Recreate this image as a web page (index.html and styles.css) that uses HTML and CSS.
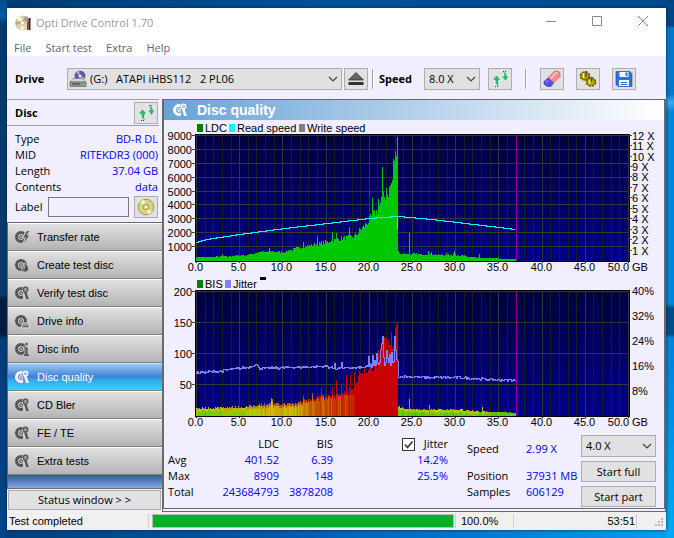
FILE: index.html
```html
<!DOCTYPE html>
<html lang="en">
  <head>
    <meta charset="UTF-8" />
    <meta name="viewport" content="width=device-width, initial-scale=1.0" />
    <title>Opti Drive Control 1.70</title>
    <link rel="stylesheet" href="styles.css">
  </head>
  <body>
    <svg class="defs" aria-hidden="true">
      <symbol id="disc" viewBox="0 0 16 16">
        <path fill="currentColor" fill-rule="evenodd" d="M7 2a6 6 0 1 0 0 12A6 6 0 0 0 7 2zM7 5a3 3 0 1 1 0 6 3 3 0 0 1 0-6z"/>
        <circle cx="7" cy="8" r="1.500" fill="none" stroke="currentColor"/>
      </symbol>
      <symbol id="disc-test" viewBox="0 0 16 16">
        <use href="#disc"/>
        <circle class="cut" cx="11.500" cy="4.500" r="3.300"/>
        <path class="cut" d="M9 8h4l2 6H9z"/>
        <circle cx="11.500" cy="4.500" r="2.200" fill="none" stroke="currentColor" stroke-width="1.400"/>
        <path fill="currentColor" d="M10 7.500h3l.5 3 1.500 3.500h-3L11 10z"/>
        <circle cx="11.500" cy="4.500" r=".8" fill="currentColor"/>
      </symbol>
      <symbol id="disc-bolt" viewBox="0 0 16 16">
        <use href="#disc"/>
        <path class="cut" d="M12 1L8 9h2.500L8 16l7.500-9z"/>
        <path fill="currentColor" d="M13 2L9.500 8.500H12L10 14l5-7.500h-2.500L15 2z"/>
      </symbol>
      <symbol id="disc-burn" viewBox="0 0 16 16">
        <use href="#disc"/>
        <path fill="currentColor" stroke="#ccc" stroke-width=".8" d="M10 6c3 1 5 4 4.500 6.500C14 14.500 12.500 15 11 15c-2.500 0-4-2-3-4.500.5 1 1 1.500 2 1.500 1-2 .5-4 0-6z"/>
      </symbol>
      <symbol id="disc-drive" viewBox="0 0 16 16">
        <use href="#disc"/>
        <path fill="#999" stroke="#ddd" stroke-width=".8" d="M7.500 12l2-2h4.500l1.500 2v3h-8z"/>
        <path stroke="#555" d="M9 13.500h5"/>
      </symbol>
      <symbol id="disc-info" viewBox="0 0 16 16">
        <use href="#disc"/>
        <path fill="currentColor" stroke="#ccc" stroke-width=".8" d="M11 1.500h3v3h-3zM9.500 6H14v7h1.500v2.500h-6V13H11V8H9.500z"/>
      </symbol>
      <symbol id="refresh" viewBox="0 0 18 18">
        <path fill="#28b870" stroke="#fff" stroke-width=".6" d="M5.500 5L1 10h3c0 4 2 6 5 7-1.500-2-2-4-1-7h2zM9 1c3 0 4 2 4 5h-2.500l4 5.500L18 6h-2c0-3-2.500-5-7-5z"/>
        <path stroke="#333" stroke-dasharray="1 1" d="M12 1.500h4M4 16.500h4"/>
      </symbol>
      <symbol id="chevron" viewBox="0 0 10 6">
        <path fill="none" stroke="#444" stroke-width="1.200" d="M1 1l4 4 4-4"/>
      </symbol>
    </svg>

    <div class="window">
      <header class="titlebar">
        <svg class="app-icon" viewBox="0 0 16 16">
          <circle cx="7.500" cy="8" r="7" fill="#e3d6a4" stroke="#a99c77" stroke-width=".5"/>
          <path fill="#fff9dc" d="M7.500 8L2 3.500 5.500 1zM7.500 8L9 15l-4-.5z"/>
          <path fill="#b5aa86" d="M7.500 8L1 6v4zM7.500 8L12 2.500 9 1z"/>
          <circle cx="7.500" cy="8" r="2" fill="#fff" stroke="#999" stroke-width=".6"/>
          <path fill="#a09a90" d="M10 4l2-3 1 1v5h-3z"/>
          <path fill="#222" d="M13.500 3h2v12h-2z"/>
          <path fill="#b03028" d="M12 7h1.500v8H12z"/>
        </svg>
        <span class="title">Opti Drive Control 1.70</span>
        <div class="win-buttons">
          <button aria-label="Minimize"><svg viewBox="0 0 12 12"><path d="M1 6.500h10"/></svg></button>
          <button aria-label="Maximize"><svg viewBox="0 0 12 12"><path d="M1.500 1.500h9v9h-9z"/></svg></button>
          <button aria-label="Close"><svg viewBox="0 0 12 12"><path d="M1 1l10 10M11 1L1 11"/></svg></button>
        </div>
      </header>

      <nav class="menu">
        <a href="#">File</a>
        <a href="#">Start test</a>
        <a href="#">Extra</a>
        <a href="#">Help</a>
      </nav>

      <div class="toolbar">
        <label class="drive-label" for="drive">Drive</label>
        <div class="select drive">
          <svg class="drive-icon" viewBox="0 0 18 18">
            <circle cx="11" cy="6" r="5.500" fill="#655a99"/>
            <path fill="#b9afe0" d="M11 6L7 2l3-1.500zM11 6l5 2-2 3z"/>
            <circle cx="11" cy="6" r="1.500" fill="#eee"/>
            <path fill="#d5d5d5" stroke="#777" stroke-width=".6" d="M1 12l3-3.500h10l3 3.500z"/>
            <path fill="#999" stroke="#555" stroke-width=".6" d="M1 12h16v4.500H1z"/>
            <path stroke="#333" d="M3 14h8"/>
            <path stroke="#20d020" stroke-width="2" d="M12 14h2"/>
          </svg>
          <select id="drive"><option>(G:)&nbsp;&nbsp; ATAPI iHBS112&nbsp;&nbsp; 2 PL06</option></select>
          <svg class="arrow"><use href="#chevron"/></svg>
        </div>
        <button class="tool" aria-label="Eject">
          <svg viewBox="0 0 18 18">
            <path fill="#666" stroke="#222" stroke-width=".7" d="M9 2.500l7.500 7.500h-15z"/>
            <path fill="#333" d="M1.500 12h15v3h-15z"/>
          </svg>
        </button>
        <span class="sep"></span>
        <label class="speed-label" for="speed">Speed</label>
        <div class="select speed">
          <select id="speed"><option>8.0 X</option></select>
          <svg class="arrow"><use href="#chevron"/></svg>
        </div>
        <button class="tool" aria-label="Refresh speed"><svg><use href="#refresh"/></svg></button>
        <span class="sep wide"></span>
        <div class="tools">
          <button class="tool" aria-label="Erase">
            <svg viewBox="0 0 18 18">
              <path fill="#ff8a8a" stroke="#c05050" stroke-width=".6" d="M5 8l6.500-7H15l2 2v3.500L10.500 13z"/>
              <path fill="#5050f0" stroke="#3030a0" stroke-width=".6" d="M5 8l5.500 5L8 16.500H4L1 14v-2.500z"/>
              <path stroke="#ffd0d0" stroke-width="1.500" d="M8 8.500L14 2"/>
              <path stroke="#9090ff" stroke-width="1.500" d="M3 12.500l2-2"/>
            </svg>
          </button>
          <button class="tool" aria-label="Options">
            <svg viewBox="0 0 18 18">
              <ellipse cx="6" cy="6" rx="4.500" ry="4" fill="#b0a800" stroke="#6a6400" stroke-width="1.800" stroke-dasharray="2.500 .8"/>
              <ellipse cx="12" cy="12" rx="4.500" ry="4" fill="#b8ae00" stroke="#6a6400" stroke-width="1.800" stroke-dasharray="2.500 .8"/>
              <path stroke="#f0ea90" stroke-width="1.500" d="M4.500 3v5M10.500 9.500v4"/>
              <path stroke="#555" stroke-width="1.500" d="M7 1v6M12.500 7v5"/>
            </svg>
          </button>
          <button class="tool" aria-label="Save">
            <svg viewBox="0 0 18 18">
              <path fill="#2f6fe4" stroke="#1848b0" stroke-width=".6" d="M1 1.500h14l2 2v13H3l-2-2z"/>
              <path fill="#f4f8ff" d="M4.500 2h9v5h-9zM4 10h10v6H4z"/>
              <path fill="#2f6fe4" d="M10.500 2.500h2v3.500h-2zM6 12h6v1H6zM6 14h6v1H6z"/>
            </svg>
          </button>
        </div>
      </div>

      <div class="main">
        <aside class="sidebar">
          <div class="disc-head">
            <h2>Disc</h2>
            <button class="tool" aria-label="Refresh disc"><svg><use href="#refresh"/></svg></button>
          </div>
          <div class="disc-info">
            <dl>
              <dt>Type</dt><dd>BD-R DL</dd>
              <dt>MID</dt><dd>RITEKDR3 (000)</dd>
              <dt>Length</dt><dd>37.04 GB</dd>
              <dt>Contents</dt><dd>data</dd>
            </dl>
            <div class="label-row">
              <label for="disc-label">Label</label>
              <input type="text" id="disc-label">
              <button class="tool" aria-label="Read label">
                <svg viewBox="0 0 18 18">
                  <circle cx="9" cy="9" r="7.800" fill="#dcd67a" stroke="#77744a" stroke-width=".7"/>
                  <path fill="#fbf8bd" d="M9 9L3 4l4-2.500zM9 9l6 5-4 2.500z"/>
                  <circle cx="9" cy="9" r="3" fill="#c9c37c" stroke="#8a875a" stroke-width=".6"/>
                  <circle cx="9" cy="9" r="1.300" fill="#fff"/>
                </svg>
              </button>
            </div>
          </div>
          <div class="tests">
            <button><svg><use href="#disc-bolt"/></svg>Transfer rate</button>
            <button><svg><use href="#disc-burn"/></svg>Create test disc</button>
            <button><svg><use href="#disc-test"/></svg>Verify test disc</button>
            <button><svg><use href="#disc-drive"/></svg>Drive info</button>
            <button><svg><use href="#disc-info"/></svg>Disc info</button>
            <button class="active"><svg><use href="#disc-test"/></svg>Disc quality</button>
            <button><svg><use href="#disc-test"/></svg>CD Bler</button>
            <button><svg><use href="#disc-test"/></svg>FE / TE</button>
            <button><svg><use href="#disc-test"/></svg>Extra tests</button>
          </div>
          <button class="status-window">Status window &gt; &gt;</button>
        </aside>

        <section class="panel">
          <h1><svg><use href="#disc-test"/></svg>Disc quality</h1>
          <svg id="ldc" class="chart" viewBox="0 0 500 157"></svg>
          <svg id="bis" class="chart" viewBox="0 0 500 156"></svg>
          <div class="results">
            <table>
              <thead>
                <tr>
                  <td></td><th>LDC</th><th>BIS</th>
                  <th><label><input type="checkbox" checked><svg class="tick" viewBox="0 0 13 13"><path d="M3 6.500L5.500 9.500 10.500 3.500"/></svg>Jitter</label></th>
                </tr>
              </thead>
              <tbody>
                <tr><th>Avg</th><td>401.52</td><td>6.39</td><td>14.2%</td></tr>
                <tr><th>Max</th><td>8909</td><td>148</td><td>25.5%</td></tr>
                <tr><th>Total</th><td>243684793</td><td>3878208</td><td></td></tr>
              </tbody>
            </table>
            <dl class="progress-info">
              <dt class="first">Speed</dt><dd class="first">2.99 X</dd>
              <dt>Position</dt><dd>37931 MB</dd>
              <dt>Samples</dt><dd>606129</dd>
            </dl>
            <div class="actions">
              <div class="select">
                <select aria-label="Test speed"><option>4.0 X</option></select>
                <svg class="arrow"><use href="#chevron"/></svg>
              </div>
              <button>Start full</button>
              <button>Start part</button>
            </div>
          </div>
        </section>
      </div>

      <footer class="statusbar">
        <span class="message">Test completed</span>
        <div class="bar"><div class="fill" style="width: 100%"></div></div>
        <span class="percent">100.0%</span>
        <span class="time">53:51</span>
        <svg class="grip" viewBox="0 0 10 10"><path d="M7 0h2v2H7zM4 3h2v2H4zM7 3h2v2H7zM1 6h2v2H1zM4 6h2v2H4zM7 6h2v2H7z"/></svg>
      </footer>
    </div>
    <script src="script.js"></script>
  </body>
</html>
```

FILE: styles.css
```css
* {
  box-sizing: border-box;
}
body {
  margin: 0;
  min-height: 100vh;
  padding: 8px 8px 8px 7px;
  font: 11px/16px "Open Sans", "Noto Sans", sans-serif;
  color: #000;
  background:
    linear-gradient(#004686 0 26px, #0078cc 28px 94px, #38aaf4 102px, #0086dc 112px 304px, #004c88 308px 334px, #0080dc 338px, #00a8f4) right / 8px 100% no-repeat,
    linear-gradient(#004a8c, #0060a8 16px, #003a6e 24px 294px, #001e44 300px 334px, #003e78 340px, #004488) left / 7px 100% no-repeat,
    linear-gradient(90deg, #003c74, #00529c 50%, #004a8c) top / 100% 8px no-repeat,
    linear-gradient(90deg, #003f7c, #0058a8 40%, #0078d4 70%, #00a0f0) bottom / 100% 8px no-repeat,
    #00529c;
}
h1, h2, dl, dd {
  margin: 0;
}
button, select, input {
  font: inherit;
  color: inherit;
}
button {
  padding: 0;
}
.defs {
  position: absolute;
  width: 0;
  height: 0;
}

.window {
  background: #f0eeff;
  box-shadow: 0 0 3px #002850;
}
.titlebar {
  display: flex;
  align-items: center;
  height: 32px;
  padding: 0 0 2px 8px;
  background: #fff;
  color: #999;
}
.app-icon {
  width: 16px;
  height: 16px;
  margin-right: 5px;
}
.title {
  flex: 1;
}
.win-buttons {
  display: flex;
}
.win-buttons button {
  width: 46px;
  height: 28px;
  border: 0;
  background: none;
}
.win-buttons svg {
  width: 12px;
  height: 12px;
  fill: none;
  stroke: #888;
}
.menu {
  display: flex;
  gap: 14px;
  height: 16px;
  padding-left: 7px;
  background: #fff;
}
.menu a {
  color: #666;
  text-decoration: none;
}

.toolbar {
  display: flex;
  align-items: center;
  height: 43px;
  padding: 3px 8px 0;
}
.toolbar label {
  font-weight: bold;
}
.drive-label {
  width: 52px;
}
.speed-label {
  width: 45px;
}
.select {
  position: relative;
}
.select select {
  display: block;
  width: 100%;
  height: 22px;
  padding: 0 4px;
  border: 1px solid #adadad;
  border-radius: 0;
  background: #e1e1e1;
  appearance: none;
}
.select .arrow {
  position: absolute;
  right: 4px;
  top: 8px;
  width: 10px;
  height: 6px;
  pointer-events: none;
}
.drive {
  flex: 0 1 275px;
  margin-right: 2px;
}
.drive select {
  padding-left: 22px;
}
.drive-icon {
  position: absolute;
  left: 2px;
  top: 2px;
  width: 18px;
  height: 18px;
}
.speed {
  width: 56px;
  margin-right: 8px;
}
.tool {
  display: flex;
  align-items: center;
  justify-content: center;
  width: 24px;
  height: 22px;
  border: 1px solid #adadad;
  background: #e1e1e1;
}
.tool svg {
  width: 18px;
  height: 18px;
}
.sep {
  width: 2px;
  height: 20px;
  margin: 0 5px 0 4px;
  border-left: 1px solid #a0a0a0;
  border-right: 1px solid #fff;
}
.sep.wide {
  margin: 0 13px;
}
.tools {
  display: flex;
  gap: 12px;
}

.main {
  display: grid;
  grid-template-columns: 155px 1fr;
}
.sidebar {
  display: flex;
  flex-direction: column;
}
.disc-head {
  display: flex;
  align-items: center;
  justify-content: space-between;
  height: 27px;
  margin-right: 3px;
  padding: 0 1px 0 8px;
  border-top: 1px solid #a0a0a0;
  border-bottom: 1px solid #a0a0a0;
}
.disc-head h2 {
  font-size: 11px;
}
.disc-info {
  height: 96px;
  padding: 5px 4px 0 8px;
}
.disc-info dl {
  display: grid;
  grid-template-columns: auto auto;
  justify-content: space-between;
}
dd {
  color: #0000ff;
}
.disc-info dd {
  text-align: right;
}
.label-row {
  display: flex;
  align-items: center;
  gap: 5px;
  padding-top: 1px;
}
.label-row input {
  flex: 1;
  min-width: 0;
  height: 20px;
  border: 1px solid #7a7a7a;
  background: #f0eeff;
}
.tests {
  flex: 1;
  padding-bottom: 13px;
  border: 1px solid #696969;
  border-right: 0;
  background: linear-gradient(#2c58a0, #86aade) bottom / 100% 13px no-repeat;
}
.tests button {
  display: flex;
  align-items: center;
  gap: 7px;
  width: 100%;
  height: 28px;
  padding-left: 6px;
  border: 0;
  border-top: 1px solid #fff;
  border-bottom: 1px solid #808080;
  background: linear-gradient(#e0e0e0, #b4b4b4);
  font: 11px/16px "Liberation Sans", Arial, sans-serif;
}
.tests svg {
  width: 16px;
  height: 16px;
  color: #555;
  --cut: #ccc;
}
.tests button.active {
  border-top-color: #b8e8ff;
  background: linear-gradient(#9cc8f4, #3c80d4 50%, #30a8e8 60%, #34d4fc);
  color: #fff;
}
.tests .active svg {
  color: #fff;
  --cut: #5c9ce0;
}
.cut {
  fill: var(--cut);
}
.status-window {
  height: 20px;
  margin: 1px 1px 2px;
  border: 1px solid #adadad;
  background: #e1e1e1;
  line-height: 16px;
}

.panel {
  border: solid #696969;
  border-width: 1px 2px 4px;
  border-bottom-style: double;
}
.panel h1 {
  display: flex;
  align-items: center;
  gap: 9px;
  height: 20px;
  padding-left: 8px;
  background: linear-gradient(90deg, #68a2d6, #fff);
  color: #fff;
  font: bold 14px/20px "Liberation Sans", Arial, sans-serif;
}
.panel h1 svg {
  width: 16px;
  height: 16px;
  --cut: #6ea6d8;
}
.chart {
  display: block;
  width: 100%;
  height: auto;
  font: 11px "Liberation Sans", Arial, sans-serif;
  shape-rendering: crispEdges;
}
.results {
  display: flex;
  height: 75px;
  padding: 2px 8px 0 4px;
}
.results table {
  flex: none;
  width: 280px;
  height: 64px;
  margin-top: 1px;
  border-collapse: collapse;
  table-layout: fixed;
}
.results th, .results td {
  width: 54px;
  height: 16px;
  padding: 0;
  font-weight: normal;
  text-align: right;
}
.results tbody td {
  color: #0000ff;
}
.results th:first-child, .results td:first-child {
  width: 34px;
  text-align: left;
}
.results th:nth-child(2), .results td:nth-child(2) {
  width: 77px;
}
.results th:nth-child(4), .results td:nth-child(4) {
  width: 115px;
}
.results label {
  position: relative;
  display: flex;
  align-items: center;
  justify-content: flex-end;
  gap: 9px;
}
.results input {
  width: 13px;
  height: 13px;
  margin: 0;
  border: 1px solid #333;
  background: #fff;
  appearance: none;
}
.results .tick {
  width: 13px;
  height: 13px;
  margin-left: -22px;
  fill: none;
  stroke: #333;
  stroke-width: 1.5px;
  pointer-events: none;
}
.results input:not(:checked) + .tick {
  visibility: hidden;
}
.progress-info {
  display: grid;
  grid-template-columns: 59px auto;
  grid-template-rows: 32px 16px 16px;
  margin: 1px auto 0 19px;
}
.progress-info .first {
  padding-top: 5px;
}
.actions {
  display: flex;
  flex-direction: column;
  gap: 4px;
  width: 75px;
}
.actions button {
  height: 21px;
  border: 1px solid #adadad;
  background: #e1e1e1;
}

.statusbar {
  display: flex;
  align-items: stretch;
  height: 18px;
  padding: 2px;
  background: #f0f0f0;
  font: 11px/15px "Liberation Sans", Arial, sans-serif;
}
.message {
  width: 140px;
  margin-right: 3px;
  border-right: 1px solid #d0d0d0;
}
.bar {
  flex: 1;
  border: 1px solid #bcbcbc;
  background: #e6e6e6;
}
.fill {
  height: 100%;
  background: #06b025;
}
.percent {
  width: 59px;
  margin-left: 1px;
  padding-left: 5px;
  border-left: 1px solid #d0d0d0;
  border-right: 1px solid #d0d0d0;
}
.time {
  width: 123px;
  padding-right: 1px;
  border-right: 1px solid #d0d0d0;
  text-align: right;
}
.grip {
  align-self: flex-end;
  width: 10px;
  height: 10px;
  margin-left: 17px;
  fill: #b8b8b8;
}
```

FILE: script.js
```js
var NS = 'http://www.w3.org/2000/svg';
var LEFT = 32, WIDTH = 433;   // plot area
var END = 320;                // last recorded column
var seed = 7;

function rnd() {
  seed = (seed * 16807) % 2147483647;
  return seed / 2147483647;
}

function add(svg, name, attrs, text) {
  var el = document.createElementNS(NS, name);
  for (var k in attrs) el.setAttribute(k, attrs[k]);
  if (text) el.textContent = text;
  svg.appendChild(el);
  return el;
}

// linear interpolation between [x, value] points
function at(points, x) {
  for (var i = 1; i < points.length; i++) {
    var a = points[i - 1], b = points[i];
    if (x <= b[0]) return a[1] + (b[1] - a[1]) * (x - a[0]) / (b[0] - a[0]);
  }
  return points[points.length - 1][1];
}

function line(svg, x1, y1, x2, y2, color) {
  add(svg, 'path', { d: 'M' + x1 + ' ' + y1 + 'L' + x2 + ' ' + y2, stroke: color, fill: 'none' });
}

function plot(svg, top, bottom, rows) {
  var defs = add(svg, 'linearGradient', { id: svg.id + '-bg', x1: 0, y1: 0, x2: 0, y2: 1 });
  add(defs, 'stop', { offset: 0, 'stop-color': '#000040' });
  add(defs, 'stop', { offset: 1, 'stop-color': '#000088' });
  add(svg, 'rect', { x: LEFT - 1, y: top - 1, width: WIDTH + 2, height: bottom - top + 2, fill: '#000' });
  add(svg, 'rect', { x: LEFT, y: top, width: WIDTH, height: bottom - top, fill: 'url(#' + svg.id + '-bg)' });
  for (var gb = 0; gb <= 50; gb++) {
    var x = LEFT + Math.round(gb * 8.64) + 0.5;
    line(svg, x, top, x, bottom, gb % 5 ? '#1c1c1c' : '#343434');
    if (gb % 5 == 0) {
      line(svg, x, bottom, x, bottom + 2, '#000');
      add(svg, 'text', { x: gb == 50 ? x - 10 : x - 1, y: bottom + 10, 'text-anchor': 'middle' }, gb.toFixed(1));
    }
  }
  add(svg, 'text', { x: 468, y: bottom + 10 }, 'GB');
  for (var i = 0; i < rows.length; i++) {
    var y = Math.round(bottom - (bottom - top - 1) * (i + 1) / rows.length) - 0.5;
    line(svg, LEFT, y, LEFT + WIDTH, y, '#343434');
    line(svg, LEFT - 4, y, LEFT, y, '#444');
    add(svg, 'text', { x: 28, y: y + 4, 'text-anchor': 'end' }, rows[i]);
  }
}

function legend(svg, y, items) {
  items.forEach(function (it) {
    add(svg, 'rect', { x: it[0], y: y - 8, width: 6, height: 8, fill: it[1] });
    add(svg, 'text', { x: it[0] + 8, y: y }, it[2]);
  });
}

function drawLdc() {
  var svg = document.getElementById('ldc');
  var top = 15, bottom = 141;
  var rows = ['1000', '2000', '3000', '4000', '5000', '6000', '7000', '8000', '9000'];
  plot(svg, top, bottom, rows);
  legend(svg, 12, [[33, '#008000', 'LDC'], [65, '#00ffff', 'Read speed'], [135, '#808080', 'Write speed']]);

  var level = [[0, 250], [31, 310], [51, 400], [64, 620], [88, 620], [98, 800], [108, 1000], [121, 1150],
    [131, 1300], [144, 1500], [158, 1650], [164, 2100], [171, 2600], [176, 3000], [181, 3400], [186, 4200],
    [189, 4400], [193, 4800], [196, 5400], [198, 6700], [200, 7300], [201, 7500], [202, 500], [235, 430],
    [265, 380], [280, 220], [320, 120]];
  var peaks = { 26: 480, 73: 900, 107: 1350, 121: 1780, 136: 2100, 140: 2000, 153: 2400, 176: 4500, 182: 4400,
    186: 6700, 190: 5200, 194: 5400, 197: 7300, 201: 8850, 202: 700, 213: 2000, 232: 700, 235: 650,
    250: 560, 257: 560, 258: 700, 259: 520, 283: 500 };
  var d = '';
  for (var x = 0; x < END; x++) {
    var v = peaks[x] || at(level, x) * (0.94 + rnd() * 0.24);
    d += 'M' + (LEFT + x + 0.5) + ' ' + bottom + 'V' + (bottom - Math.round(v * 0.014));
  }
  add(svg, 'path', { d: d, stroke: '#00c800' });

  var speed = [[0, 19], [10, 22], [43, 27], [88, 33], [131, 38], [173, 43], [201, 45]];
  d = 'M' + LEFT + ' ' + (bottom - 18.5);
  for (x = 1; x <= 201; x++) d += 'H' + (LEFT + x) + 'V' + (bottom - Math.round(at(speed, x)) + 0.5);
  d += 'V' + (bottom - 32) + 'M' + (LEFT + 202) + ' ' + (bottom - 44.5);
  for (x = 203; x < END; x++) d += 'H' + (LEFT + x) + 'V' + (bottom - Math.round(at([[202, 45], [235, 42], [319, 32]], x)) + 0.5);
  add(svg, 'path', { d: d, stroke: '#00ffff', fill: 'none' });

  line(svg, LEFT + END + 0.5, top, LEFT + END + 0.5, bottom, '#900090');
  for (var s = 1; s <= 12; s++) {
    var y = Math.round(bottom - s * 10.45) - 0.5;
    line(svg, LEFT + WIDTH, y, LEFT + WIDTH + 3, y, '#444');
    add(svg, 'text', { x: 468, y: y + 4 }, s + ' X');
  }
}

function drawBis() {
  var svg = document.getElementById('bis');
  var top = 14, bottom = 139;
  plot(svg, top, bottom, ['50', '100', '150', '200']);
  legend(svg, 11, [[33, '#008000', 'BIS'], [61, '#8080ff', 'Jitter']]);
  add(svg, 'rect', { x: 96, y: 0, width: 6, height: 3, fill: '#000' });

  var level = [[0, 12], [51, 14], [64, 18], [98, 19], [111, 26], [124, 29], [138, 31], [148, 35], [158, 45],
    [164, 62], [171, 74], [181, 82], [187, 108], [194, 112], [198, 120], [201, 142], [202, 14], [215, 10],
    [265, 10], [275, 8], [320, 5]];
  var peaks = { 75: 28, 76: 27, 107: 32, 116: 36, 125: 44, 136: 46, 140: 57, 145: 51, 150: 66, 154: 65,
    158: 70, 163: 72, 182: 106, 186: 125, 190: 125, 195: 134, 199: 141, 200: 146, 201: 148, 213: 27, 233: 17, 286: 14 };
  for (var x = 0; x < END; x++) {
    var v = peaks[x] || at(level, x) * (0.9 + rnd() * 0.26);
    var h = Math.round(v * 0.625);
    var heat = x > 201 ? 0 : at([[0, 0.02], [51, 0.18], [60, 0.34], [100, 0.4], [112, 0.66], [150, 0.82], [160, 1], [201, 1]], x);
    heat += (rnd() - 0.5) * (x > 158 ? 0 : 0.24);
    var hue = x > 201 ? 78 + rnd() * 24 : Math.max(0, 90 - 90 * heat);
    add(svg, 'rect', { x: LEFT + x, y: bottom - h, width: 1, height: h, fill: 'hsl(' + hue + ',100%,39%)' });
    // hotter tip of the column
    if (h > 4) {
      add(svg, 'rect', { x: LEFT + x, y: bottom - h, width: 1, height: x > 110 && x < 160 ? Math.max(h - 21, 2) : 3,
        fill: 'hsl(' + Math.max(0, hue - 24) + ',100%,39%)' });
    }
  }

  var jitter = [[0, 44], [22, 45], [41, 48], [51, 49], [60, 52], [63, 48], [130, 50], [138, 48], [168, 49],
    [178, 51], [201, 54], [202, 40], [235, 39], [265, 39], [290, 37], [320, 36]];
  var bumps = { 138: 53, 145: 54, 172: 60, 176: 61, 178: 56, 180: 63, 184: 67, 185: 73, 186: 80, 187: 59,
    190: 66, 191: 58, 193: 62, 195: 64, 198: 80, 199: 66, 200: 57 };
  var d = 'M' + LEFT + ' ' + (bottom - 43.5);
  for (x = 0; x < END; x++) {
    var j = bumps[x] || at(jitter, x) + (rnd() - 0.5) * (x > 170 && x < 202 ? 5 : 2.4);
    d += 'H' + (LEFT + x + 0.5) + 'V' + (bottom - Math.round(j) + 0.5);
  }
  add(svg, 'path', { d: d, stroke: '#8080ff', fill: 'none' });

  line(svg, LEFT + END + 0.5, top, LEFT + END + 0.5, bottom, '#900090');
  for (var p = 8; p <= 40; p += 8) {
    add(svg, 'text', { x: 468, y: Math.round(bottom - p * 3.12) + 4 }, p + '%');
  }
}

drawLdc();
drawBis();
```
